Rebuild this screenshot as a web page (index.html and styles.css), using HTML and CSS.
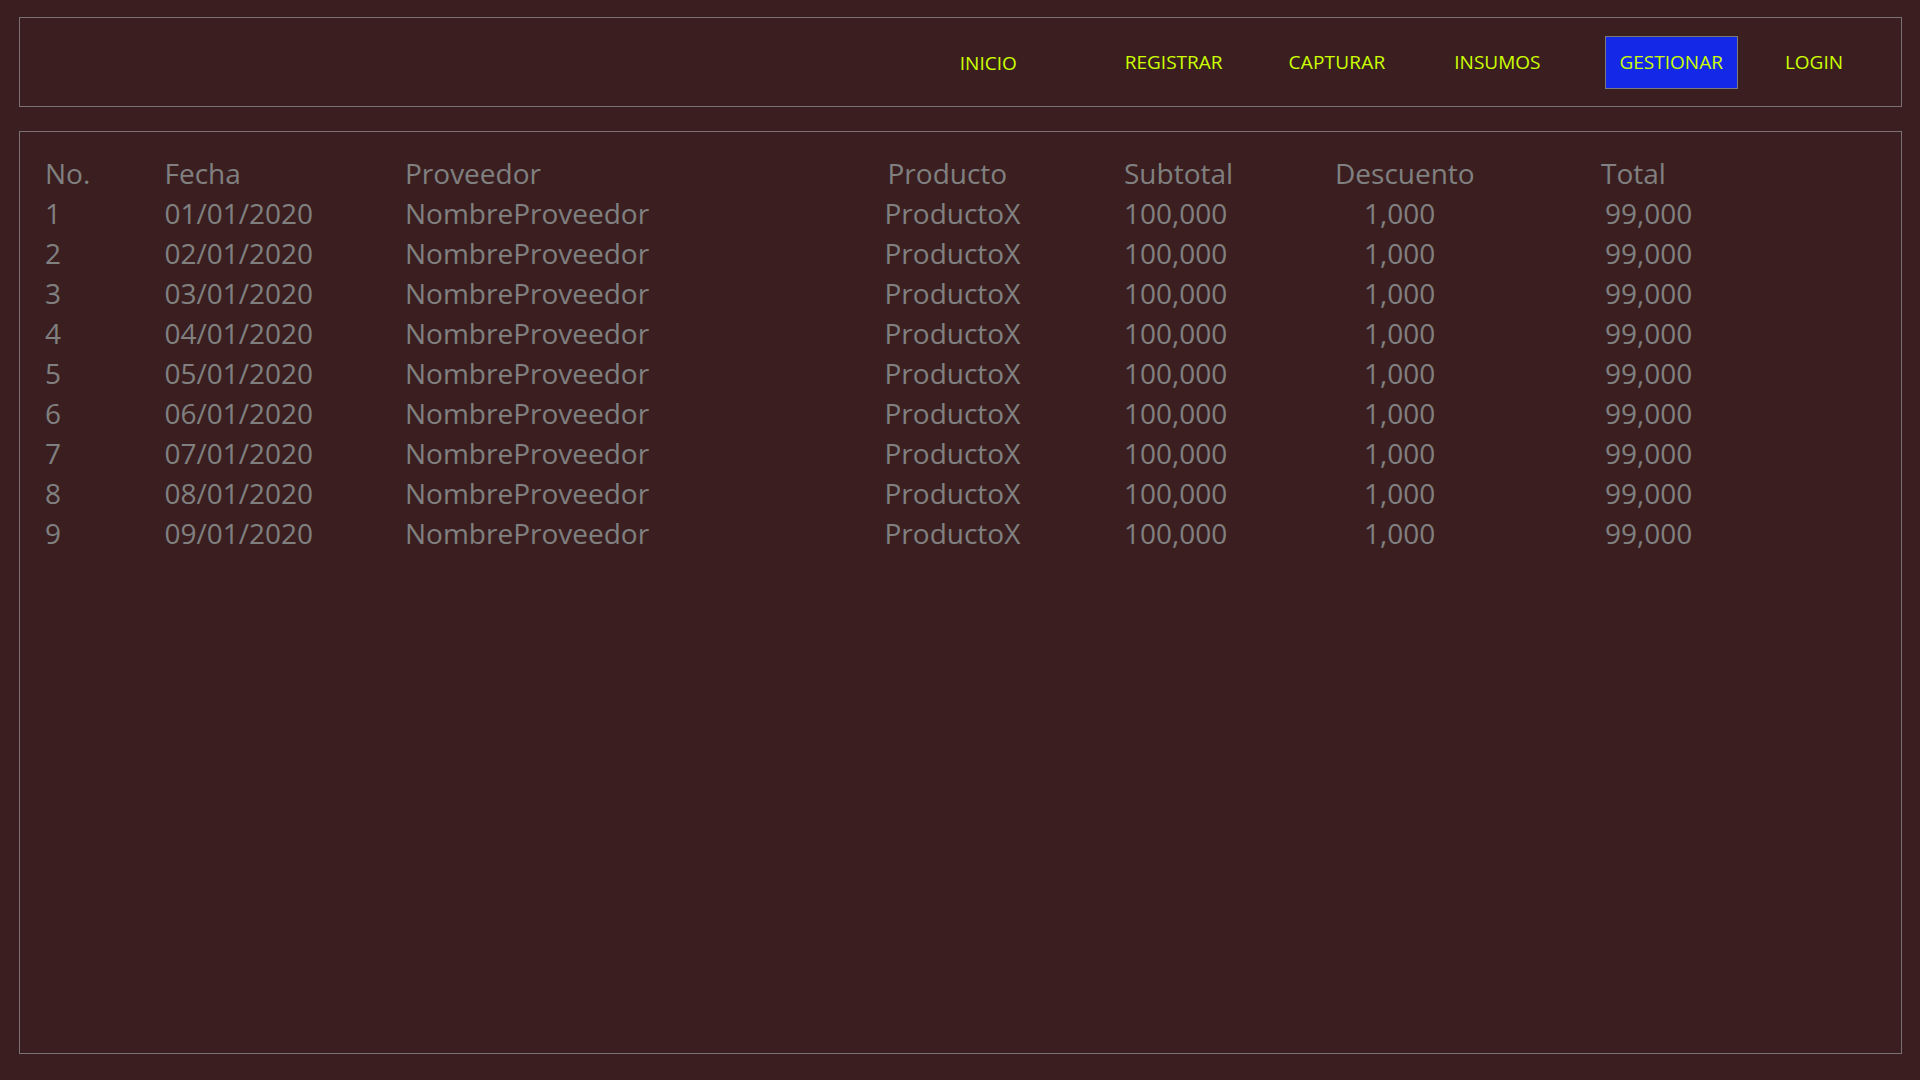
FILE: index.html
```html
<!DOCTYPE html>
<html lang="es">
<head>
<meta charset="utf-8">
<title>Gestionar</title>
<link rel="stylesheet" href="styles.css">
</head>
<body>
<header class="top">
  <nav class="nav">
    <a class="nav-link nav-inicio" href="#">INICIO</a>
    <a class="nav-link nav-registrar" href="#">REGISTRAR</a>
    <a class="nav-link nav-capturar" href="#">CAPTURAR</a>
    <a class="nav-link nav-insumos" href="#">INSUMOS</a>
    <a class="nav-link active" href="#">GESTIONAR</a>
    <a class="nav-link nav-login" href="#">LOGIN</a>
  </nav>
</header>
<main class="panel">
  <div class="grid">
    <div class="cell head">No.</div>
    <div class="cell head">Fecha</div>
    <div class="cell head">Proveedor</div>
    <div class="cell head shift-prod">Producto</div>
    <div class="cell head">Subtotal</div>
    <div class="cell head">Descuento</div>
    <div class="cell head">Total</div>

    <div class="cell">1</div><div class="cell">01/01/2020</div><div class="cell">NombreProveedor</div><div class="cell">ProductoX</div><div class="cell">100,000</div><div class="cell shift-desc">1,000</div><div class="cell shift-total">99,000</div>
    <div class="cell">2</div><div class="cell">02/01/2020</div><div class="cell">NombreProveedor</div><div class="cell">ProductoX</div><div class="cell">100,000</div><div class="cell shift-desc">1,000</div><div class="cell shift-total">99,000</div>
    <div class="cell">3</div><div class="cell">03/01/2020</div><div class="cell">NombreProveedor</div><div class="cell">ProductoX</div><div class="cell">100,000</div><div class="cell shift-desc">1,000</div><div class="cell shift-total">99,000</div>
    <div class="cell">4</div><div class="cell">04/01/2020</div><div class="cell">NombreProveedor</div><div class="cell">ProductoX</div><div class="cell">100,000</div><div class="cell shift-desc">1,000</div><div class="cell shift-total">99,000</div>
    <div class="cell">5</div><div class="cell">05/01/2020</div><div class="cell">NombreProveedor</div><div class="cell">ProductoX</div><div class="cell">100,000</div><div class="cell shift-desc">1,000</div><div class="cell shift-total">99,000</div>
    <div class="cell">6</div><div class="cell">06/01/2020</div><div class="cell">NombreProveedor</div><div class="cell">ProductoX</div><div class="cell">100,000</div><div class="cell shift-desc">1,000</div><div class="cell shift-total">99,000</div>
    <div class="cell">7</div><div class="cell">07/01/2020</div><div class="cell">NombreProveedor</div><div class="cell">ProductoX</div><div class="cell">100,000</div><div class="cell shift-desc">1,000</div><div class="cell shift-total">99,000</div>
    <div class="cell">8</div><div class="cell">08/01/2020</div><div class="cell">NombreProveedor</div><div class="cell">ProductoX</div><div class="cell">100,000</div><div class="cell shift-desc">1,000</div><div class="cell shift-total">99,000</div>
    <div class="cell">9</div><div class="cell">09/01/2020</div><div class="cell">NombreProveedor</div><div class="cell">ProductoX</div><div class="cell">100,000</div><div class="cell shift-desc">1,000</div><div class="cell shift-total">99,000</div>
  </div>
</main>
</body>
</html>
```

FILE: styles.css
```css
html, body {
  margin: 0;
  padding: 0;
  background: #3b1f20;
}

body {
  padding: 17px 18px 0 19px;
  font-family: "Open Sans", "Noto Sans", sans-serif;
  color: #808080;
  height: 1080px;
  box-sizing: border-box;
}

.top {
  border: 1px solid #7a7272;
  height: 90px;
  box-sizing: border-box;
  display: flex;
  align-items: center;
  justify-content: flex-end;
  padding-right: 42px;
}

.nav {
  display: flex;
  align-items: center;
  margin-top: 1px;
}

.nav-link {
  font-size: 19px;
  color: #ccff00;
  text-decoration: none;
  padding: 0 15px;
  line-height: 51px;
  border: 1px solid transparent;
}

.nav-inicio {
  position: relative;
  top: 1px;
}

.nav-registrar {
  margin-left: 76px;
}

.nav-capturar {
  margin-left: 34px;
  letter-spacing: 0.2px;
}

.nav-insumos {
  margin-left: 37px;
}

.active {
  background: #1428e8;
  border-color: #7a7a7a;
  margin-left: 49px;
  padding: 0 14px 0 13px;
}

.nav-login {
  margin-left: 31px;
}

.panel {
  margin-top: 24px;
  border: 1px solid #7a7272;
  height: 923px;
  box-sizing: border-box;
  padding: 21px 0 0 25px;
}

.grid {
  display: grid;
  grid-template-columns: 119.5px 240.5px 479.5px 239.5px 211px 266px auto;
  font-size: 28px;
  line-height: 40px;
}

.cell {
  white-space: nowrap;
}

.shift-prod {
  padding-left: 3px;
}

.shift-desc {
  padding-left: 29px;
}

.shift-total {
  padding-left: 4px;
}
```
